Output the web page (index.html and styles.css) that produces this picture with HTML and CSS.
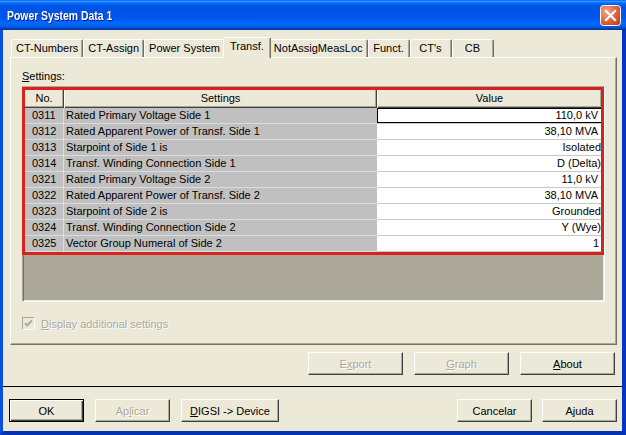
FILE: index.html
```html
<!DOCTYPE html>
<html>
<head>
<meta charset="utf-8">
<title>Power System Data 1</title>
<link rel="stylesheet" href="styles.css">
</head>
<body>
<div class="window">
  <div class="titlebar">
    <span class="title"><span class="title-text">Power System Data 1</span></span>
    <span class="close">
      <svg width="21" height="21" viewBox="0 0 21 21">
        <defs>
          <radialGradient id="cg" cx="0.3" cy="0.3" r="0.9">
            <stop offset="0" stop-color="#f3a58a"/>
            <stop offset="0.55" stop-color="#e1633f"/>
            <stop offset="1" stop-color="#c0391c"/>
          </radialGradient>
        </defs>
        <rect x="0.5" y="0.5" width="20" height="20" rx="3" fill="url(#cg)" stroke="#ffffff"/>
        <path d="M6 6 L15 15 M15 6 L6 15" stroke="#ffffff" stroke-width="2.2" stroke-linecap="square"/>
      </svg>
    </span>
  </div>
  <div class="client">
    <div class="tabs">
      <div class="tab">CT-Numbers</div>
      <div class="tab">CT-Assign</div>
      <div class="tab">Power System</div>
      <div class="tab active">Transf.</div>
      <div class="tab">NotAssigMeasLoc</div>
      <div class="tab">Funct.</div>
      <div class="tab">CT's</div>
      <div class="tab">CB</div>
    </div>
    <div class="panel">
      <div class="label"><u>S</u>ettings:</div>
      <div class="grid">
        <table class="sheet">
          <colgroup>
            <col class="c-no">
            <col class="c-name">
            <col class="c-val">
          </colgroup>
          <thead>
            <tr><th>No.</th><th>Settings</th><th>Value</th></tr>
          </thead>
          <tbody>
            <tr><td class="no">0311</td><td class="name">Rated Primary Voltage Side 1</td><td class="val unit focus">110,0 kV</td></tr>
            <tr><td class="no">0312</td><td class="name">Rated Apparent Power of Transf. Side 1</td><td class="val unit">38,10 MVA</td></tr>
            <tr><td class="no">0313</td><td class="name">Starpoint of Side 1 is</td><td class="val">Isolated</td></tr>
            <tr><td class="no">0314</td><td class="name">Transf. Winding Connection Side 1</td><td class="val">D (Delta)</td></tr>
            <tr><td class="no">0321</td><td class="name">Rated Primary Voltage Side 2</td><td class="val unit">11,0 kV</td></tr>
            <tr><td class="no">0322</td><td class="name">Rated Apparent Power of Transf. Side 2</td><td class="val unit">38,10 MVA</td></tr>
            <tr><td class="no">0323</td><td class="name">Starpoint of Side 2 is</td><td class="val">Grounded</td></tr>
            <tr><td class="no">0324</td><td class="name">Transf. Winding Connection Side 2</td><td class="val">Y (Wye)</td></tr>
            <tr><td class="no">0325</td><td class="name">Vector Group Numeral of Side 2</td><td class="val num">1</td></tr>
          </tbody>
        </table>
        <div class="highlight"></div>
      </div>
      <div class="check">
        <span class="box">
          <svg width="13" height="13" viewBox="0 0 13 13">
            <path d="M3 6 L5 8.5 L10 3.5" fill="none" stroke="#aca899" stroke-width="2"/>
          </svg>
        </span>
        <span class="check-text"><u>D</u>isplay additional settings</span>
      </div>
    </div>
    <div class="actions">
      <div class="btn wide disabled">E<u>x</u>port</div>
      <div class="btn wide disabled"><u>G</u>raph</div>
      <div class="btn wide"><u>A</u>bout</div>
    </div>
    <div class="sep"></div>
    <div class="footer">
      <div class="group">
        <div class="btn default">OK</div>
        <div class="btn disabled">Ap<u>l</u>icar</div>
        <div class="btn digsi"><u>D</u>IGSI -&gt; Device</div>
      </div>
      <div class="group right">
        <div class="btn">Cancelar</div>
        <div class="btn">Ajuda</div>
      </div>
    </div>
  </div>
</div>
</body>
</html>
```

FILE: styles.css
```css
* {
  box-sizing: border-box;
}

html, body {
  margin: 0;
  padding: 0;
}

body {
  width: 626px;
  height: 435px;
  overflow: hidden;
  font-family: "Liberation Sans", Arial, sans-serif;
  font-size: 11px;
  color: #000;
  background: #0a4ee0;
}

.window {
  width: 626px;
  height: 435px;
  display: flex;
  flex-direction: column;
}

.titlebar {
  flex: none;
  height: 30px;
  display: flex;
  align-items: center;
  padding: 0 5px 0 7px;
  background: linear-gradient(180deg, #0058ee 0%, #3593ff 4%, #288eff 6%, #127dff 8%, #036ffc 10%, #0262ee 14%, #0057e5 20%, #0054e3 24%, #0055eb 56%, #005bf5 66%, #026afe 76%, #0062ef 86%, #0052d6 92%, #0040ab 96%, #003092 100%);
}

.title {
  flex: 1;
  color: #fff;
  font-family: "Liberation Sans", Arial, sans-serif;
  font-weight: bold;
  font-size: 13px;
  text-shadow: 1px 1px 0 #0a1a8a;
  padding-top: 1px;
}

.title-text {
  display: inline-block;
  transform: scaleX(0.8);
  transform-origin: left center;
}

.close {
  width: 21px;
  height: 21px;
  display: block;
  margin-top: 1px;
}

.close svg {
  display: block;
}

.client {
  flex: 1;
  display: flex;
  flex-direction: column;
  background: #ece9d8;
  border-style: solid;
  border-width: 0 4px 4px 3px;
  border-color: #0846d6 #0733c0 #0632b4 #0a4fe0;
}

/* Tabs */
.tabs {
  flex: none;
  height: 27px;
  display: flex;
  align-items: flex-end;
  padding: 7px 0 0 8px;
}

.tab {
  height: 18px;
  min-width: 42px;
  padding: 0 4px;
  line-height: 16px;
  text-align: center;
  white-space: nowrap;
  background: #ece9d8;
  border: 1px solid;
  border-bottom: 0;
  border-color: #fff #716f64 transparent #fff;
  border-radius: 2px 2px 0 0;
  box-shadow: inset -1px 0 0 #aca899;
}

.tab.active {
  height: 21px;
  margin: 0 -2px -1px;
  padding: 0 6px;
  line-height: 16px;
  position: relative;
  z-index: 1;
}

.panel {
  flex: none;
  height: 288px;
  margin: 0 5px 0 7px;
  padding: 12px 11px 0 11px;
  border: 1px solid;
  border-color: #fff #716f64 #716f64 #fff;
  box-shadow: inset -1px -1px 0 #aca899;
}

.label {
  height: 13px;
  line-height: 13px;
}

/* Grid */
.grid {
  position: relative;
  margin-top: 3px;
  height: 216px;
  padding: 1px;
  background: #aca899;
  border: 1px solid;
  border-color: #aca899 #fff #fff #aca899;
  box-shadow: inset 1px 1px 0 #716f64, inset -1px -1px 0 #f1efe2;
}

.sheet {
  width: 578px;
  table-layout: fixed;
  border-collapse: separate;
  border-spacing: 0;
}

.c-no { width: 40px; }
.c-name { width: 313px; }
.c-val { width: 225px; }

.sheet th {
  padding: 0;
  line-height: 20px;
  font-weight: normal;
  text-align: center;
  background: #ece9d8;
  box-shadow: inset 1px 1px 0 #fff, inset -1px -1px 0 #404040, inset -2px -2px 0 #aca899;
}

.sheet td {
  padding: 0;
  line-height: 15px;
  white-space: nowrap;
  overflow: hidden;
}

.sheet .no {
  padding-left: 8px;
  background: #c0c0c0;
  border-bottom: 1px solid #dcdcdc;
  border-right: 1px solid #dcdcdc;
}

.sheet .name {
  padding-left: 2px;
  background: #c0c0c0;
  border-bottom: 1px solid #dcdcdc;
}

.sheet .val {
  text-align: right;
  padding-right: 1px;
  background: #fff;
  border-bottom: 1px solid #c8c8c8;
}

.sheet .val.unit {
  padding-right: 4px;
}

.sheet .val.num {
  padding-right: 3px;
}

.sheet .val.focus {
  box-shadow: inset 0 0 0 1px #000;
}

.highlight {
  position: absolute;
  left: -1px;
  top: 0;
  width: 582px;
  height: 168px;
  border: 3px solid #d8221c;
  pointer-events: none;
}

/* Checkbox */
.check {
  display: flex;
  align-items: center;
  gap: 6px;
  margin-top: 15px;
  height: 13px;
  color: #aca899;
}

.box {
  width: 13px;
  height: 13px;
  display: block;
  border: 1px solid;
  border-color: #aca899 #fff #fff #aca899;
  background: #ece9d8;
}

.box svg {
  display: block;
  margin: -1px;
}

.check-text {
  text-shadow: 1px 1px 0 #fff;
}

/* Buttons */
.btn {
  width: 75px;
  height: 23px;
  display: flex;
  align-items: center;
  justify-content: center;
  white-space: nowrap;
  background: #ece9d8;
  border: 1px solid;
  border-color: #fff #404040 #404040 #fff;
  box-shadow: inset -1px -1px 0 #aca899;
}

.btn.wide {
  width: 95px;
}

.btn.digsi {
  width: 98px;
}

.btn.default {
  border-color: #000;
  box-shadow: inset 1px 1px 0 #fff, inset -1px -1px 0 #404040, inset -2px -2px 0 #aca899;
}

.btn.disabled {
  color: #aca899;
  text-shadow: 1px 1px 0 #fff;
}

.actions {
  flex: none;
  display: flex;
  justify-content: flex-end;
  gap: 11px;
  margin: 7px 7px 0 0;
}

.sep {
  flex: none;
  margin-top: 11px;
  height: 1px;
  background: #000;
}

.footer {
  flex: none;
  display: flex;
  justify-content: space-between;
  margin-top: 12px;
  padding: 0 5px 0 6px;
}

.group {
  display: flex;
  gap: 11px;
}

.group.right {
  gap: 10px;
}
```
